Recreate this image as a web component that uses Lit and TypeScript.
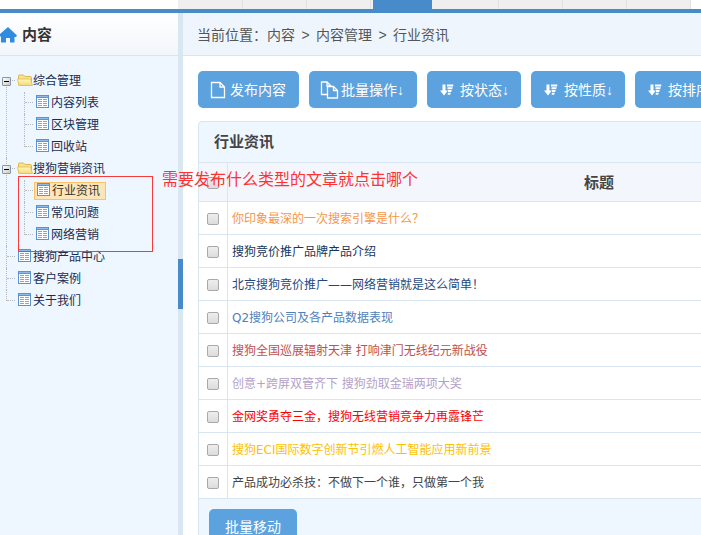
import { LitElement, html, css, svg, nothing } from "lit";
import { customElement, state } from "lit/decorators.js";
import { classMap } from "lit/directives/class-map.js";

interface TreeItem {
  label: string;
  children?: TreeItem[];
}

const TREE: TreeItem[] = [
  {
    label: "综合管理",
    children: [{ label: "内容列表" }, { label: "区块管理" }, { label: "回收站" }],
  },
  {
    label: "搜狗营销资讯",
    children: [{ label: "行业资讯" }, { label: "常见问题" }, { label: "网络营销" }],
  },
  { label: "搜狗产品中心" },
  { label: "客户案例" },
  { label: "关于我们" },
];

const ARTICLES = [
  { title: "你印象最深的一次搜索引擎是什么？", tone: "orange" },
  { title: "搜狗竞价推广品牌产品介绍", tone: "navy" },
  { title: "北京搜狗竞价推广——网络营销就是这么简单！", tone: "indigo" },
  { title: "Q2搜狗公司及各产品数据表现", tone: "blue" },
  { title: "搜狗全国巡展辐射天津 打响津门无线纪元新战役", tone: "brick" },
  { title: "创意+跨屏双管齐下 搜狗劲取金瑞两项大奖", tone: "lilac" },
  { title: "金网奖勇夺三金，搜狗无线营销竞争力再露锋芒", tone: "red" },
  { title: "搜狗ECI国际数字创新节引燃人工智能应用新前景", tone: "gold" },
  { title: "产品成功必杀技：不做下一个谁，只做第一个我", tone: "dark" },
];

const pageIcon = svg`<svg width="16" height="18" viewBox="0 0 16 18" fill="none" stroke="#fff" stroke-width="1.3">
  <path d="M1.500 1.500h8.500l4.500 4.500v10.500h-13z"/><path d="M10 1.500v4.500h4.500"/></svg>`;

const copyIcon = svg`<svg width="16" height="18" viewBox="0 0 16 18" fill="none" stroke="#fff" stroke-width="1.3">
  <path d="M6 13.500H.5V1h5.500l4 4v.5"/><path d="M6 1v4h4"/>
  <path d="M6.500 5.500h6l4 4v7.500h-10z"/><path d="M12.500 5.500v4h4"/></svg>`;

const sortIcon = svg`<svg width="14" height="13" viewBox="0 0 14 13" fill="#fff">
  <path d="M2.500 1.500h3v6H8l-4 5-4-5h2.500z"/>
  <path d="M7 1.500h6.500l-.5 2H7zM7.500 4.200h5.200l-.5 2H7.500zM8 7h3.800l-.6 2H8zM8 9.700h2.800l-.6 2H7.500z"/></svg>`;

const ACTIONS = [
  { label: "发布内容", icon: pageIcon },
  { label: "批量操作↓", icon: copyIcon },
  { label: "按状态↓", icon: sortIcon },
  { label: "按性质↓", icon: sortIcon },
  { label: "按排序↓", icon: sortIcon },
];

const folderIcon = svg`<svg width="16" height="16" viewBox="0 0 16 16">
  <defs><linearGradient id="folder" x1="0" y1="0" x2="0" y2="1">
    <stop offset="0" stop-color="#fff8c4"/><stop offset="1" stop-color="#f4d870"/></linearGradient></defs>
  <path d="M1.500 12v-9q0-1 1-1h4l1.500 1.500h5.500q1 0 1 1v7.500z" fill="#f8e28c" stroke="#dcb84c"/>
  <path d="M.5 6h13l2 6.500H2z" fill="url(#folder)" stroke="#dfbb50" stroke-width=".8"/></svg>`;

const listIcon = svg`<svg width="16" height="16" viewBox="0 0 16 16" shape-rendering="crispEdges">
  <path fill="#5c94d2" d="M1 0h13v13H1z"/><path fill="#8dbcea" d="M2 1h11v1H2z"/>
  <path fill="#fff" d="M2 3h11v9H2z"/>
  <path fill="#7ca9da" d="M3 4h4v1H3zM8 4h4v1H8zM3 6h4v1H3zM8 6h4v1H8zM3 8h4v1H3zM8 8h4v1H8zM3 10h4v1H3zM8 10h4v1H8z"/></svg>`;

@customElement("app-root")
export class AppRoot extends LitElement {
  @state() private selected = "行业资讯";

  static styles = css`
    :host {
      display: flex;
      flex-direction: column;
      height: 100vh;
      overflow: hidden;
      position: relative;
      background: #fff;
      color: #444;
      font: 14px/20px "Liberation Sans", "Noto Sans CJK SC", sans-serif;
    }
    * { box-sizing: border-box; }
    svg { display: block; flex: none; overflow: visible; }
    a { color: inherit; text-decoration: none; }
    button { font: inherit; border: 0; cursor: pointer; }
    h1, h2, ul { margin: 0; padding: 0; list-style: none; font-size: 15px; }

    .tabs {
      flex: none;
      display: flex;
      height: 13px;
      padding-left: 178px;
      border-bottom: 4px solid #478bca;
    }
    .tab { width: 64px; flex: none; background: #efefef; border-right: 1px solid #e2e2e2; }
    .tab.first { width: 65px; }
    .tab.active { background: #478bca; border: 2px solid #efefef; border-width: 0 3px 0 2px; }

    .body { flex: 1; min-height: 0; display: flex; }
    .side { flex: none; width: 178px; background: #eef6ff; }
    .side-head {
      display: flex;
      align-items: center;
      gap: 4px;
      height: 43px;
      padding-top: 2px;
      border-bottom: 1px solid #d9e6f0;
      background: linear-gradient(#fff, #f2f6fb);
      color: #333;
    }
    .divider {
      flex: none;
      width: 5px;
      padding: 0;
      background: #d9e7f1;
      display: flex;
      align-items: center;
    }
    .handle { width: 5px; height: 50px; margin-top: 20px; background: #478bca; }

    .tree { padding-top: 14px; }
    .tree, .tree ul { font: 12px/22px "DejaVu Sans", "Noto Sans CJK SC", sans-serif; color: #1b2c50; }
    .tree ul { margin-left: 18px; }
    .node { position: relative; }
    .node::before {
      content: "";
      position: absolute;
      left: 6px;
      top: 0;
      bottom: 0;
      border-left: 1px dotted #b8b8b8;
    }
    .tree > .node:first-child::before { top: 11px; }
    .node:last-child::before { bottom: 11px; }
    .row { display: flex; align-items: center; height: 22px; }
    .joint { position: relative; flex: none; width: 17px; height: 22px; display: flex; align-items: center; padding-left: 2px; }
    .joint::before {
      content: "";
      position: absolute;
      left: 7px;
      right: 2px;
      top: 10px;
      border-top: 1px dotted #b8b8b8;
    }
    .toggle {
      position: relative;
      width: 9px;
      height: 9px;
      padding: 3px 1px;
      border: 1px solid #7f97b3;
      border-radius: 1px;
      background: linear-gradient(135deg, #fff, #cfc8ba);
    }
    .toggle i { display: block; height: 1px; background: #000; }
    .link { display: flex; align-items: center; height: 18px; padding-right: 5px; line-height: 20px; white-space: nowrap; }
    .link.on {
      margin-left: -1px;
      padding-left: 1px;
      border: 1px solid #ffbf66;
      background: #ffe6b8;
      color: #333;
    }

    .main { flex: 1; min-width: 0; overflow: hidden; }
    .crumbs {
      display: flex;
      align-items: center;
      height: 43px;
      padding: 2px 0 0 14px;
      border-bottom: 1px solid #d9e6f0;
      background: #eff5fd;
      white-space: nowrap;
      color: #555;
    }
    .sep { width: 21px; text-align: center; }
    .content { padding: 15px 0 0 15px; min-width: 788px; }
    .actions { display: flex; gap: 10px; }
    .btn {
      display: flex;
      align-items: center;
      gap: 4px;
      height: 37px;
      padding: 0 13px 0 12px;
      border-radius: 5px;
      background: #5ba2de;
      color: #fff;
      white-space: nowrap;
    }
    .btn.sort { gap: 6px; padding: 0 12px 0 13px; }
    .btn.plain { padding: 0 16px; }

    .panel { margin-top: 13px; border: 1px solid #d9e6f0; border-radius: 4px 4px 0 0; background: #eef6ff; }
    .panel-title { height: 40px; padding-left: 15px; line-height: 40px; }
    .grid { width: 100%; border-collapse: separate; border-spacing: 0; table-layout: fixed; background: #fff; }
    .grid th, .grid td { height: 33px; padding: 2px 0 0; border-top: 1px solid #d9e6f0; vertical-align: middle; }
    .grid th { height: 39px; background: #f3f7fd; font-size: 15px; }
    .grid .pick { width: 29px; border-right: 1px solid #d9e6f0; }
    .grid .title { padding-left: 4px; font: 12px/16px "DejaVu Sans", "Noto Sans CJK SC", sans-serif; }
    .check {
      appearance: none;
      display: block;
      width: 12px;
      height: 12px;
      margin: 0 auto;
      border: 1px solid #a9a9a9;
      border-radius: 2px;
      background: linear-gradient(#eee, #dcdcdc);
    }
    .check:checked { background: #478bca; }
    .orange { color: #f79646; }
    .navy { color: #17365d; }
    .indigo { color: #1f497d; }
    .blue { color: #4f81bd; }
    .brick { color: #c0504d; }
    .lilac { color: #b2a2c7; }
    .red { color: #f00; }
    .gold { color: #ffc000; }
    .dark { color: #444; }
    .panel-foot { padding: 10px; border-top: 1px solid #d9e6f0; }
    .panel-foot .btn { height: 35px; }

    .frame {
      position: absolute;
      left: 18px;
      top: 176px;
      width: 135px;
      height: 76px;
      border: 1px solid #f83a3a;
      pointer-events: none;
    }
    .note {
      position: absolute;
      left: 162px;
      top: 169px;
      font-size: 16px;
      line-height: 22px;
      white-space: nowrap;
      color: #ff3232;
      pointer-events: none;
    }
  `;

  private renderNode(item: TreeItem): unknown {
    const on = item.label === this.selected;
    return html`<li class="node">
      <div class="row">
        <span class="joint">
          ${item.children ? html`<button class="toggle" aria-label="折叠"><i></i></button>` : nothing}
        </span>
        <a class=${classMap({ link: true, on })} href="#" @click=${() => (this.selected = item.label)}>
          ${item.children ? folderIcon : listIcon}<span class="text">${item.label}</span>
        </a>
      </div>
      ${item.children ? html`<ul>${item.children.map((c) => this.renderNode(c))}</ul>` : nothing}
    </li>`;
  }

  render() {
    return html`
      <nav class="tabs">
        ${[0, 1, 2, 3, 4, 5, 6, 7].map(
          (i) => html`<span class=${classMap({ tab: true, first: i === 0, active: i === 3 })}></span>`
        )}
      </nav>
      <div class="body">
        <aside class="side">
          <div class="side-head">
            <svg width="18" height="16" viewBox="0 0 18 16" fill="#2f8ce0">
              <path d="M8 0 17 8.500l-1 1.500h-1.500v5.500H10V11H6v4.500H1V9.500H0V7z" />
            </svg>
            <h1>内容</h1>
          </div>
          <ul class="tree">${TREE.map((item) => this.renderNode(item))}</ul>
        </aside>
        <button class="divider" aria-label="收起侧栏"><span class="handle"></span></button>
        <main class="main">
          <nav class="crumbs">
            <span>当前位置：</span><a href="#">内容</a><span class="sep">&gt;</span><a href="#">内容管理</a
            ><span class="sep">&gt;</span><a href="#">行业资讯</a>
          </nav>
          <div class="content">
            <div class="actions">
              ${ACTIONS.map(
                (a) => html`<button class=${classMap({ btn: true, sort: a.icon === sortIcon })}>
                  ${a.icon}<span>${a.label}</span>
                </button>`
              )}
            </div>
            <section class="panel">
              <h2 class="panel-title">行业资讯</h2>
              <table class="grid">
                <thead>
                  <tr>
                    <th class="pick"><input class="check" type="checkbox" aria-label="全选" /></th>
                    <th>标题</th>
                  </tr>
                </thead>
                <tbody>
                  ${ARTICLES.map(
                    (a) => html`<tr>
                      <td class="pick"><input class="check" type="checkbox" aria-label=${a.title} /></td>
                      <td class="title"><a class=${a.tone} href="#">${a.title}</a></td>
                    </tr>`
                  )}
                </tbody>
              </table>
              <div class="panel-foot"><button class="btn plain">批量移动</button></div>
            </section>
          </div>
        </main>
      </div>
      <div class="frame"></div>
      <div class="note">需要发布什么类型的文章就点击哪个</div>
    `;
  }
}
